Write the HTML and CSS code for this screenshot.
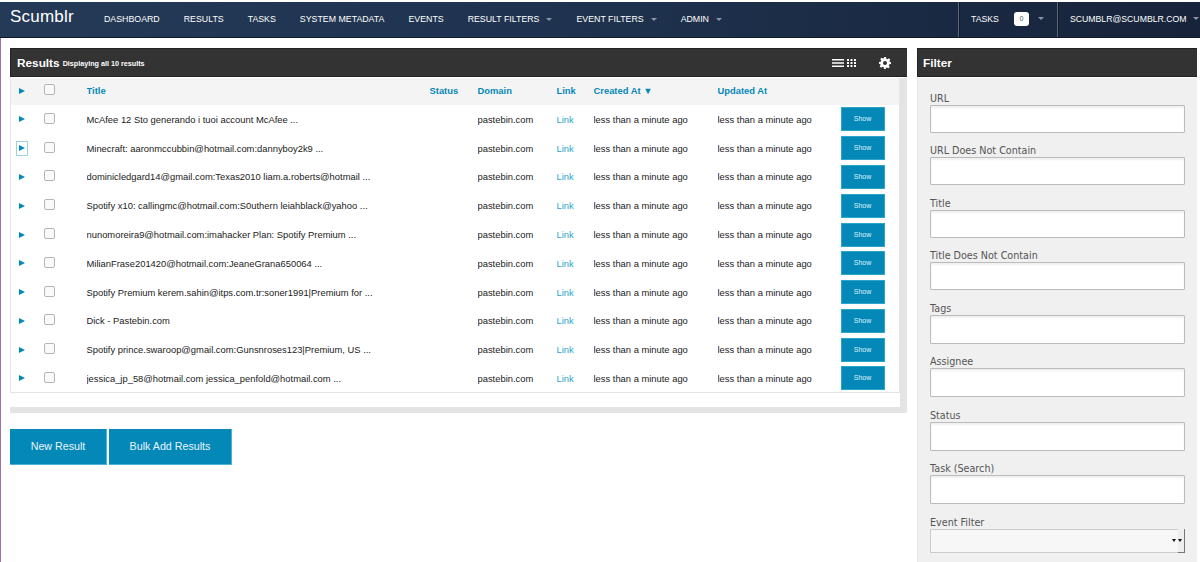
FILE: index.html
```html
<!DOCTYPE html>
<html lang="en">
<head>
<meta charset="utf-8">
<title>Scumblr</title>
<link rel="stylesheet" href="styles.css">
</head>
<body>
<nav class="topbar">
  <a class="brand">Scumblr</a>
  <ul class="menu">
    <li>Dashboard</li>
    <li>Results</li>
    <li>Tasks</li>
    <li>System Metadata</li>
    <li>Events</li>
    <li>Result Filters<i class="caret"></i></li>
    <li>Event Filters<i class="caret"></i></li>
    <li>Admin<i class="caret"></i></li>
  </ul>
  <div class="nav-right">
    <div class="nav-cell nav-tasks">Tasks<span class="badge">0</span><i class="caret"></i></div>
    <div class="nav-cell nav-user">scumblr@scumblr.com<i class="caret"></i></div>
  </div>
</nav>
<div class="page">
  <main class="content">
    <section class="panel-head results-head">
      <h2>Results</h2><small>Displaying all 10 results</small>
      <div class="tools">
        <svg class="ico-list" width="12" height="8" viewBox="0 0 12 8"><path d="M0 .75h12M0 4h12M0 7.250h12" stroke="#fff" stroke-width="1.400" fill="none"/></svg>
        <svg class="ico-grid" width="9" height="8" viewBox="0 0 9 8"><path d="M0 0h2v2H0zM3.500 0h2v2h-2zM7 0h2v2H7zM0 3h2v2H0zM3.500 3h2v2h-2zM7 3h2v2H7zM0 6h2v2H0zM3.500 6h2v2h-2zM7 6h2v2H7z" fill="#fff"/></svg>
        <svg class="ico-gear" width="12" height="12" viewBox="0 0 24 24"><path fill="#fff" fill-rule="evenodd" d="M10 0h4l.7 3.400 2.300 1 2.900-1.900 2.800 2.800-1.900 2.900 1 2.300L24 10v4l-3.400.7-1 2.300 1.900 2.900-2.800 2.800-2.900-1.900-2.300 1L14 24h-4l-.7-3.400-2.300-1-2.900 1.900-2.800-2.800 1.900-2.900-1-2.300L0 14v-4l3.400-.7 1-2.300-1.900-2.900 2.800-2.800 2.900 1.900 2.300-1zM12 8a4 4 0 1 0 0 8 4 4 0 0 0 0-8z"/></svg>
      </div>
    </section>
    <div class="table-wrap">
      <table class="results">
        <thead>
          <tr>
            <th class="c-arrow"><span class="arrow"></span></th>
            <th class="c-check"><span class="check"></span></th>
            <th class="c-title">Title</th>
            <th class="c-status">Status</th>
            <th class="c-domain">Domain</th>
            <th class="c-link">Link</th>
            <th class="c-created">Created At ▼</th>
            <th class="c-updated">Updated At</th>
            <th class="c-show"></th>
          </tr>
        </thead>
        <tbody>
          <tr><td><span class="arrow"></span></td><td><span class="check"></span></td><td>McAfee 12 Sto generando i tuoi account McAfee ...</td><td></td><td>pastebin.com</td><td><a>Link</a></td><td>less than a minute ago</td><td>less than a minute ago</td><td><span class="show-btn">Show</span></td></tr>
          <tr><td><span class="arrow focused"></span></td><td><span class="check"></span></td><td>Minecraft: aaronmccubbin@hotmail.com:dannyboy2k9 ...</td><td></td><td>pastebin.com</td><td><a>Link</a></td><td>less than a minute ago</td><td>less than a minute ago</td><td><span class="show-btn">Show</span></td></tr>
          <tr><td><span class="arrow"></span></td><td><span class="check"></span></td><td>dominicledgard14@gmail.com:Texas2010 liam.a.roberts@hotmail ...</td><td></td><td>pastebin.com</td><td><a>Link</a></td><td>less than a minute ago</td><td>less than a minute ago</td><td><span class="show-btn">Show</span></td></tr>
          <tr><td><span class="arrow"></span></td><td><span class="check"></span></td><td>Spotify x10: callingmc@hotmail.com:S0uthern leiahblack@yahoo ...</td><td></td><td>pastebin.com</td><td><a>Link</a></td><td>less than a minute ago</td><td>less than a minute ago</td><td><span class="show-btn">Show</span></td></tr>
          <tr><td><span class="arrow"></span></td><td><span class="check"></span></td><td>nunomoreira9@hotmail.com:imahacker Plan: Spotify Premium ...</td><td></td><td>pastebin.com</td><td><a>Link</a></td><td>less than a minute ago</td><td>less than a minute ago</td><td><span class="show-btn">Show</span></td></tr>
          <tr><td><span class="arrow"></span></td><td><span class="check"></span></td><td>MilianFrase201420@hotmail.com:JeaneGrana650064 ...</td><td></td><td>pastebin.com</td><td><a>Link</a></td><td>less than a minute ago</td><td>less than a minute ago</td><td><span class="show-btn">Show</span></td></tr>
          <tr><td><span class="arrow"></span></td><td><span class="check"></span></td><td>Spotify Premium kerem.sahin@itps.com.tr:soner1991|Premium for ...</td><td></td><td>pastebin.com</td><td><a>Link</a></td><td>less than a minute ago</td><td>less than a minute ago</td><td><span class="show-btn">Show</span></td></tr>
          <tr><td><span class="arrow"></span></td><td><span class="check"></span></td><td>Dick - Pastebin.com</td><td></td><td>pastebin.com</td><td><a>Link</a></td><td>less than a minute ago</td><td>less than a minute ago</td><td><span class="show-btn">Show</span></td></tr>
          <tr><td><span class="arrow"></span></td><td><span class="check"></span></td><td>Spotify prince.swaroop@gmail.com:Gunsnroses123|Premium, US ...</td><td></td><td>pastebin.com</td><td><a>Link</a></td><td>less than a minute ago</td><td>less than a minute ago</td><td><span class="show-btn">Show</span></td></tr>
          <tr><td><span class="arrow"></span></td><td><span class="check"></span></td><td>jessica_jp_58@hotmail.com jessica_penfold@hotmail.com ...</td><td></td><td>pastebin.com</td><td><a>Link</a></td><td>less than a minute ago</td><td>less than a minute ago</td><td><span class="show-btn">Show</span></td></tr>
        </tbody>
      </table>
      <div class="v-scroll"></div>
    </div>
    <div class="h-scroll"></div>
    <div class="actions">
      <a class="big-btn btn-new">New Result</a>
      <a class="big-btn btn-bulk">Bulk Add Results</a>
    </div>
  </main>
  <aside class="sidebar">
    <section class="panel-head filter-head"><h2>Filter</h2></section>
    <form class="filter">
      <div class="field"><label>URL</label><input type="text"></div>
      <div class="field"><label>URL Does Not Contain</label><input type="text"></div>
      <div class="field"><label>Title</label><input type="text"></div>
      <div class="field"><label>Title Does Not Contain</label><input type="text"></div>
      <div class="field"><label>Tags</label><input type="text"></div>
      <div class="field"><label>Assignee</label><input type="text"></div>
      <div class="field"><label>Status</label><input type="text"></div>
      <div class="field"><label>Task (Search)</label><input type="text"></div>
      <div class="field"><label>Event Filter</label><div class="select"><span class="sel-arrows"></span></div></div>
    </form>
  </aside>
</div>
</body>
</html>
```
FILE: styles.css
```css
* { box-sizing: border-box; }
html, body { margin: 0; padding: 0; height: 562px; overflow: hidden; background: #fff; }
body { font-family: "Liberation Sans", Arial, sans-serif; color: #222; padding-top: 2px; }
ul { list-style: none; margin: 0; padding: 0; }
h2 { margin: 0; }

.topbar { height: 36px; display: flex; align-items: stretch; background: linear-gradient(90deg, #253a56 0%, #1f3350 45%, #17233a 100%); border-bottom: 1px solid #0f1a2b; color: #fff; }
.brand { font-size: 17px; letter-spacing: .2px; line-height: 30px; margin-left: 10px; width: 94px; color: #fff; }
.menu { display: flex; align-items: center; font-size: 8.800px; text-transform: uppercase; flex: 1; padding-bottom: 2px; }
.menu li { margin-right: 24px; white-space: nowrap; }
.caret { display: inline-block; width: 0; height: 0; margin-left: 7px; vertical-align: middle; border: 3px solid transparent; border-top: 3px solid #8c96a3; border-bottom: 0; }
.nav-right { display: flex; }
.nav-cell { display: flex; align-items: center; text-transform: uppercase; font-size: 8.700px; border-left: 1px solid #5c6675; box-shadow: inset 1px 0 0 #101a2c; white-space: nowrap; padding-bottom: 2px; }
.nav-tasks { width: 99px; padding-left: 12px; }
.nav-user { width: 143px; padding-left: 12px; }
.badge { display: inline-block; width: 15px; height: 14px; margin-left: 15px; background: #fff; color: #555; border-radius: 3px; font-size: 7px; line-height: 14px; text-align: center; }
.nav-tasks .caret { margin-left: 9px; }
.nav-user .caret { margin-left: 7px; }

.page { display: flex; height: 524px; border-left: 1px solid #a06ea6; padding: 10px 3px 0 9px; gap: 10px; }
.content { width: 897px; flex: none; }
.sidebar { width: 280px; flex: none; }

.panel-head { height: 29px; background: #333; border: 1px solid #222; border-width: 1px 0 1px 1px; color: #fff; display: flex; align-items: center; padding-left: 6px; }
.panel-head h2 { font-size: 11.800px; font-weight: bold; }
.results-head small { font-size: 7.200px; font-weight: bold; margin-left: 3px; margin-top: 2px; }
.filter-head { padding-left: 5px; }
.tools { margin-left: auto; display: flex; align-items: center; margin-right: 16px; }
.ico-list { margin-right: 3px; }
.ico-gear { margin-left: 23px; }

.table-wrap { display: flex; align-items: stretch; height: 335px; margin-top: 1px; }
.results { width: 890px; height: 315px; border-collapse: collapse; table-layout: fixed; font-size: 9.400px; border: 1px solid #e4e4e4; border-top: 0; flex: none; align-self: flex-start; }
.results th, .results td { padding: 0; text-align: left; vertical-align: middle; white-space: nowrap; overflow: hidden; }
.results thead tr { height: 27px; background: #f4f4f4; }
.results th { color: #0488b8; font-weight: bold; font-size: 9.400px; padding-bottom: 2px; }
.results tbody tr { height: 28.800px; }
.results td a { color: #2ba6cb; }
.c-arrow { width: 33px; }
.c-check { width: 43px; }
.c-title { width: 343px; }
.c-status { width: 48px; }
.c-domain { width: 79px; }
.c-link { width: 37px; }
.c-created { width: 124px; }
.c-updated { width: 123px; }
.arrow { display: flex; align-items: center; justify-content: center; margin-left: 6px; width: 10px; height: 13px; }
.arrow::before { content: ""; display: block; width: 0; height: 0; border-left: 6px solid #0488b8; border-top: 3px solid transparent; border-bottom: 3px solid transparent; }
.arrow.focused { outline: 1px solid #9fd0e4; }
.check { display: block; width: 11px; height: 11px; border: 1px solid #b5b5b5; border-radius: 2px; background: #fafafa; margin-top: -2px; }
.show-btn { display: block; width: 44px; height: 24px; background: #0488b8; border: 1px solid #2ba6cb; color: #dff3fa; font-size: 7px; line-height: 21px; text-align: center; }
.v-scroll { width: 7px; background: #e4e4e4; }
.h-scroll { height: 6px; background: #e4e4e4; margin-top: -6px; }

.actions { display: flex; gap: 2px; margin-top: 16px; }
.big-btn { display: block; height: 36px; background: #0488b8; border-bottom: 1px solid #4db3d6; border-right: 1px solid #4db3d6; color: #e8f6fb; font-size: 10.700px; line-height: 34px; text-align: center; }
.btn-new { width: 97px; }
.btn-bulk { width: 123px; }

.filter { background: #f0f0f0; height: 494px; margin-top: 1px; padding: 14px 12px 0 12px; border-left: 1px solid #e4e4e4; }
.field { height: 52.400px; }
.field:nth-child(n+5) { height: 53.500px; }
.field label { display: block; font-family: "DejaVu Sans", sans-serif; font-size: 9.600px; line-height: 13px; color: #555; }
.field input { display: block; width: 255px; height: 28px; border: 1px solid #bbb; border-radius: 1px; background: #fff; box-shadow: inset 0 2px 2px #f0f0f0; padding: 0; margin: 0; }
.field:nth-child(n+5) input { height: 29px; }
.select { position: relative; width: 255px; height: 24px; border: 1px solid #ccc; background: #f7f7f7; }
.sel-arrows { position: absolute; right: -1px; top: -1px; bottom: -1px; width: 7px; background: #eee; border-right: 1px solid #777; border-bottom: 1px solid #777; }
.sel-arrows::before, .sel-arrows::after { content: ""; position: absolute; top: 10px; width: 0; height: 0; border: 2px solid transparent; border-top: 3px solid #111; border-bottom: 0; }
.sel-arrows::before { right: 8px; }
.sel-arrows::after { right: 2px; }
```
